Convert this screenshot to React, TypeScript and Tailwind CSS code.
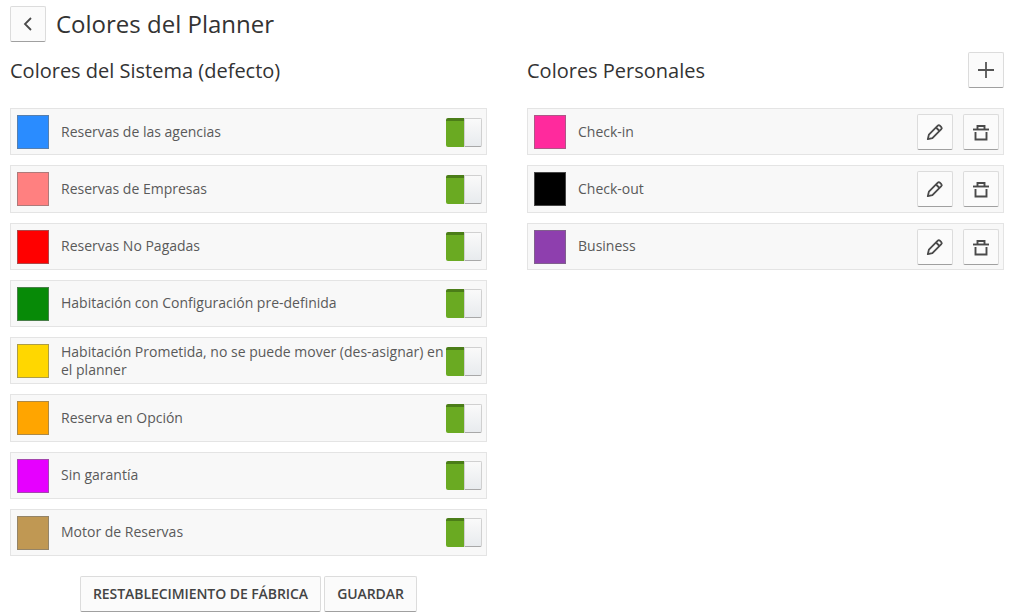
import React from "react";

const sys: [string, string][] = [
  ["#2a8cff", "Reservas de las agencias"],
  ["#ff8080", "Reservas de Empresas"],
  ["#ff0000", "Reservas No Pagadas"],
  ["#078a07", "Habitación con Configuración pre-definida"],
  ["#ffd700", "Habitación Prometida, no se puede mover (des-asignar) en el planner"],
  ["#ffa500", "Reserva en Opción"],
  ["#e600ff", "Sin garantía"],
  ["#c09853", "Motor de Reservas"],
];
const personal: [string, string][] = [
  ["#ff2a9d", "Check-in"],
  ["#000000", "Check-out"],
  ["#8e3fae", "Business"],
];

const btn =
  "flex items-center justify-center border border-[#dcdcdc] border-b-[#a0a0a0] rounded-[2px] bg-[#fbfbfb] text-[#444]";

function Swatch({ c }: { c: string }) {
  return (
    <span
      className="w-[32px] h-[34px] mt-[1px] shrink-0 border border-[#777]/60"
      style={{ backgroundColor: c }}
    />
  );
}

function Toggle() {
  return (
    <span className="flex w-[36px] h-[29px] mt-[1px] shrink-0 ml-auto -mr-[2px]">
      <span className="w-[18px] bg-[#6aaa22] border-t-[3px] border-[#4b7d18] rounded-l-[2px]" />
      <span className="w-[18px] bg-gradient-to-b from-[#fafafa] to-[#e8ebee] border border-[#d0d0d0] border-b-[#a8a8a8] rounded-r-[2px]" />
    </span>
  );
}

function Row({ c, t, children }: { c: string; t: string; children: React.ReactNode }) {
  return (
    <div className="flex items-center h-[47.25px] mb-[10px] px-[6px] bg-[#f8f8f8] border border-[#e4e4e4]">
      <Swatch c={c} />
      <span className="ml-[12px] text-[14px] leading-[18px] text-[#5a5a5a]">{t}</span>
      {children}
    </div>
  );
}

function Pencil() {
  return (
    <svg width="18" height="18" viewBox="0 0 18 18" fill="none" stroke="#4a4a4a" strokeWidth="1.8" strokeLinejoin="round">
      <path d="M1.8 16.2l1.1-4.6L11.8 2.7a1.5 1.5 0 0 1 2.1 0l1.4 1.4a1.5 1.5 0 0 1 0 2.1L6.4 15.1z" />
      <path d="M10 4.5l3.5 3.5" />
    </svg>
  );
}

function Trash() {
  return (
    <svg width="18" height="18" viewBox="0 0 18 18" fill="none" stroke="#4a4a4a" strokeWidth="1.9">
      <path d="M1 6.5h16" />
      <path d="M5.5 6V3h7v3" />
      <path d="M3.5 9v7.5h11V9" />
    </svg>
  );
}

export default function App() {
  return (
    <div className="w-[1013px] h-[614px] overflow-hidden bg-white px-[10px] font-['Open_Sans',sans-serif]">
      <div className="flex items-center h-[36px] mt-[6px]">
        <button className={`${btn} w-[36px] h-[36px]`}>
          <svg width="16" height="16" viewBox="0 0 16 16" fill="none" stroke="#4a4a4a" strokeWidth="1.8">
            <path d="M11 2L5 8l6 6" />
          </svg>
        </button>
        <h1 className="ml-[10px] text-[24px] leading-[36px] text-[#333]">Colores del Planner</h1>
      </div>
      <div className="flex gap-[40px]">
        <div className="w-[477px] shrink-0">
          <div className="flex items-center h-[36px] mt-[11px] mb-[19px]">
            <h2 className="text-[20px] text-[#333]">Colores del Sistema (defecto)</h2>
          </div>
          {sys.map(([c, t]) => (
            <Row key={t} c={c} t={t}>
              <Toggle />
            </Row>
          ))}
          <div className="flex justify-center gap-[3px] mt-[20px]">
            <button className={`${btn} h-[36px] w-[241px] pb-[1px] text-[14px] tracking-[-0.07px] font-semibold text-[#5a5a5a]`}>
              RESTABLECIMIENTO DE FÁBRICA
            </button>
            <button className={`${btn} h-[36px] w-[93px] pb-[1px] text-[14px] tracking-[-0.07px] font-semibold text-[#5a5a5a]`}>GUARDAR</button>
          </div>
        </div>
        <div className="w-[477px] shrink-0">
          <div className="flex items-center justify-between h-[36px] mt-[11px] mb-[19px]">
            <h2 className="text-[20px] text-[#333]">Colores Personales</h2>
            <button className={`${btn} w-[36px] h-[36px] mb-[2px]`}>
              <svg width="18" height="18" viewBox="0 0 18 18" stroke="#555" strokeWidth="1.8">
                <path d="M9 1v16M1 9h16" />
              </svg>
            </button>
          </div>
          {personal.map(([c, t]) => (
            <Row key={t} c={c} t={t}>
              <span className="flex gap-[10px] ml-auto -mr-[2px] mt-[1px]">
                <button className={`${btn} w-[36px] h-[36px]`}>
                  <Pencil />
                </button>
                <button className={`${btn} w-[36px] h-[36px]`}>
                  <Trash />
                </button>
              </span>
            </Row>
          ))}
        </div>
      </div>
    </div>
  );
}
